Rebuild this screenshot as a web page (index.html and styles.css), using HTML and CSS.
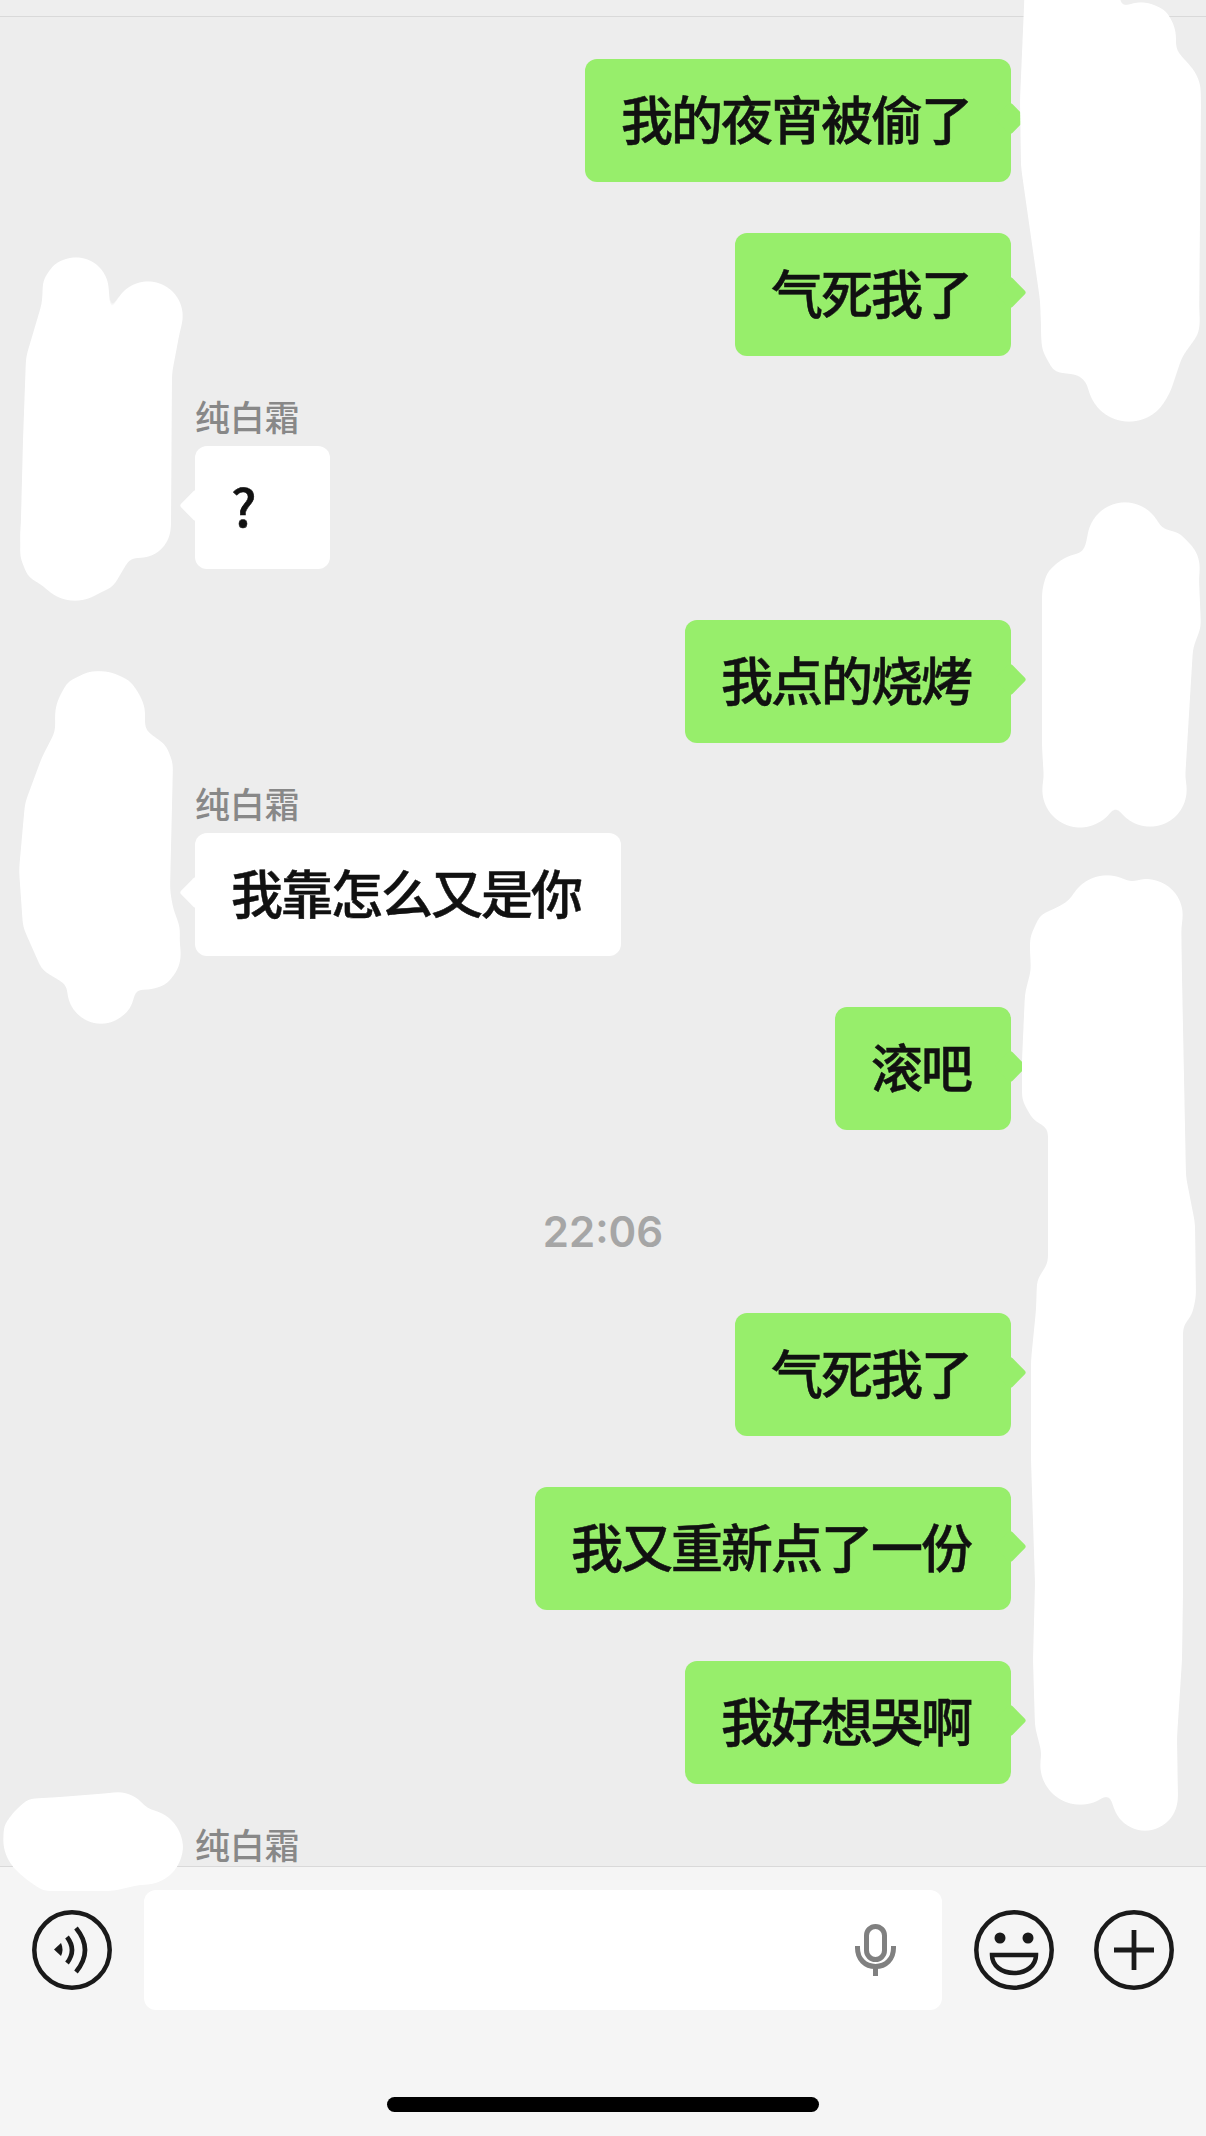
FILE: index.html
```html
<!DOCTYPE html>
<html lang="zh-CN">
<head>
<meta charset="utf-8">
<title>纯白霜</title>
<link rel="stylesheet" href="styles.css">
</head>
<body>
<div class="app">
  <div class="topbar"></div>
  <main class="chat">
    <div class="row me"><div class="bubble">我的夜宵被偷了</div></div>
    <div class="row me"><div class="bubble">气死我了</div></div>
    <div class="row them"><div class="name">纯白霜</div><div class="bubble bubble-short">?</div></div>
    <div class="row me"><div class="bubble">我点的烧烤</div></div>
    <div class="row them"><div class="name">纯白霜</div><div class="bubble">我靠怎么又是你</div></div>
    <div class="row me"><div class="bubble">滚吧</div></div>
    <div class="time">22:06</div>
    <div class="row me"><div class="bubble">气死我了</div></div>
    <div class="row me"><div class="bubble">我又重新点了一份</div></div>
    <div class="row me"><div class="bubble">我好想哭啊</div></div>
    <div class="row them"><div class="name">纯白霜</div></div>
  </main>
  <footer class="bar">
    <div class="controls">
      <svg class="icon" viewBox="0 0 80 80" fill="none" stroke="#1a1a1a">
        <circle cx="40" cy="40" r="37.7" stroke-width="4.5"/>
        <path d="M22 39.5 L29 33 Q32 39.5 29 46Z" fill="#1a1a1a" stroke="none"/>
        <path d="M35 27 Q45 40 35 53" stroke-width="4.6"/>
        <path d="M44 18 Q62 40 44 62" stroke-width="4.6"/>
      </svg>
      <div class="input">
        <svg class="mic" viewBox="0 0 41 52" fill="none" stroke="#808080" stroke-width="5">
          <rect x="11.5" y="2.5" width="18" height="33" rx="9"/>
          <path d="M2.5 22 V24 C2.5 35 10 42.5 20.5 42.5 C31 42.5 38.5 35 38.5 24 V22"/>
          <path d="M20.5 42 V52"/>
        </svg>
      </div>
      <svg class="icon" viewBox="0 0 80 80" fill="none" stroke="#1a1a1a" stroke-width="4.5">
        <circle cx="40" cy="40" r="37.7"/>
        <circle cx="26" cy="28" r="5.5" fill="#1a1a1a" stroke="none"/>
        <circle cx="54" cy="28" r="5.5" fill="#1a1a1a" stroke="none"/>
        <path d="M18 45 H62 C62 56 52 63 40 63 C28 63 18 56 18 45Z"/>
      </svg>
      <svg class="icon icon-plus" viewBox="0 0 80 80" fill="none" stroke="#1a1a1a">
        <circle cx="40" cy="40" r="37.7" stroke-width="4.5"/>
        <path d="M20 40 H60 M40 20 V60" stroke-width="4.8"/>
      </svg>
    </div>
    <div class="home"></div>
  </footer>
  <svg class="scribbles" viewBox="0 0 1206 2136" fill="#fff">
    <defs>
      <filter id="soften" filterUnits="userSpaceOnUse" x="-40" y="-60" width="1290" height="2240">
        <feGaussianBlur stdDeviation="5"/>
        <feColorMatrix values="0 0 0 0 1  0 0 0 0 1  0 0 0 0 1  0 0 0 14 -6.5"/>
      </filter>
    </defs>
    <g filter="url(#soften)">
      <polygon points="1026,-40 1120,-40 1120,12 1141,3 1166,10 1176,33 1176,50 1194,70 1201,100 1199,333 1182,357 1170,393 1149,417 1129,422 1100,410 1087,383 1079,375 1054,372 1042,350 1040,300 1021,167 1020,100"/>
      <circle cx="1141" cy="37" r="35"/>
      <circle cx="1165" cy="92" r="36"/>
      <circle cx="1129" cy="380" r="42"/>
      <circle cx="1078" cy="335" r="37"/>
      <circle cx="1163" cy="320" r="37"/>

      <polygon points="20,557 23,440 26,357 42,303 43,280 55,263 75,257 97,265 109,290 109,337 115,310 128,287 148,281 170,290 183,315 172,373 171,527 163,547 140,558 130,558 113,587 90,597 72,601 47,588 28,577"/>
      <circle cx="76" cy="290" r="33"/>
      <circle cx="148" cy="316" r="35"/>
      <circle cx="75" cy="560" r="41"/>
      <circle cx="57" cy="535" r="37"/>
      <circle cx="140" cy="527" r="31"/>

      <polygon points="1042,593 1047,572 1062,560 1083,553 1092,523 1107,507 1125,502 1147,510 1160,528 1180,533 1197,553 1199,580 1201,627 1193,648 1187,747 1184,797 1173,818 1150,827 1130,820 1117,800 1107,818 1080,827 1057,818 1045,797 1042,747"/>
      <circle cx="1125" cy="540" r="38"/>
      <circle cx="1165" cy="568" r="35"/>
      <circle cx="1084" cy="595" r="42"/>
      <circle cx="1080" cy="790" r="38"/>
      <circle cx="1150" cy="790" r="37"/>

      <polygon points="56,707 67,682 90,671 109,675 130,680 145,707 145,730 166,745 173,763 170,890 173,908 180,927 179,967 166,985 145,990 135,988 130,1010 101,1024 76,1013 67,985 42,970 23,927 19,870 25,803 42,757 55,732"/>
      <circle cx="100" cy="716" r="45"/>
      <circle cx="145" cy="954" r="36"/>
      <circle cx="101" cy="990" r="34"/>

      <polygon points="1030,937 1040,915 1058,907 1075,897 1087,883 1107,875 1128,883 1147,878 1170,888 1181,908 1182,977 1186,1177 1195,1223 1196,1297 1192,1315 1183,1326 1183,1593 1182,1660 1177,1737 1178,1800 1170,1820 1145,1831 1122,1822 1111,1800 1109,1787 1097,1802 1080,1805 1058,1797 1046,1777 1044,1762 1035,1727 1033,1660 1035,1583 1031,1460 1031,1360 1036,1310 1037,1280 1048,1263 1048,1128 1033,1120 1022,1100 1022,1060 1025,993 1031,970 1030,950"/>
      <circle cx="1107" cy="915" r="40"/>
      <circle cx="1147" cy="915" r="36"/>
      <circle cx="1070" cy="950" r="40"/>
      <circle cx="1060" cy="1090" r="38"/>
      <circle cx="1145" cy="1798" r="33"/>
      <circle cx="1080" cy="1765" r="40"/>
      <circle cx="1150" cy="1280" r="45"/>

      <polygon points="3,1826 27,1799 60,1797 123,1792 157,1815 184,1846 180,1860 160,1880 113,1891 43,1891 23,1877 13,1860"/>
      <circle cx="45" cy="1840" r="42"/>
      <circle cx="118" cy="1825" r="33"/>
      <circle cx="145" cy="1847" r="38"/>
    </g>
  </svg>
</div>
</body>
</html>
```

FILE: styles.css
```css
* {
  box-sizing: border-box;
}

html,
body {
  margin: 0;
  padding: 0;
}

body {
  background: #ededed;
  font-family: "Noto Sans CJK SC", "Liberation Sans", sans-serif;
}

.app {
  position: relative;
  display: flex;
  flex-direction: column;
  width: 1206px;
  height: 2136px;
  overflow: hidden;
  background: #ededed;
}

.topbar {
  flex: none;
  height: 17px;
  border-bottom: 1px solid #d9d9d9;
  background: #eeeeee;
}

.chat {
  flex: none;
  display: flex;
  flex-direction: column;
  gap: 51px;
  height: 1849px;
  padding: 42px 195px 0;
}

.row {
  display: flex;
  flex-direction: column;
}

.me {
  align-items: flex-end;
}

.them {
  align-items: flex-start;
}

.name {
  height: 40px;
  margin: -11px 0 10px 0;
  color: #888888;
  font-size: 35px;
  font-weight: 500;
  letter-spacing: -0.3px;
  line-height: 40px;
}

.bubble {
  position: relative;
  height: 123px;
  padding: 0 40px 0 36px;
  border-radius: 12px;
  color: #111111;
  font-size: 52px;
  font-weight: 500;
  letter-spacing: -2px;
  line-height: 118px;
  white-space: nowrap;
  -webkit-text-stroke: 0.5px #111111;
}

.bubble::after {
  content: "";
  position: absolute;
  top: calc(50% - 13.5px);
  width: 23px;
  height: 23px;
  border-radius: 3px;
  background: inherit;
  transform: rotate(45deg);
}

.me .bubble {
  background: #97ee6b;
}

.me .bubble::after {
  right: -11px;
}

.them .bubble {
  background: #ffffff;
}

.them .bubble::after {
  left: -11px;
}

.bubble-short {
  width: 135px;
}

.time {
  height: 81px;
  padding-top: 20px;
  color: #a6a6a6;
  font-family: Inter, "Liberation Sans", sans-serif;
  font-size: 42px;
  font-weight: 600;
  line-height: 62px;
  text-align: center;
}

.bar {
  flex: 1;
  display: flex;
  flex-direction: column;
  align-items: center;
  border-top: 1px solid #d9d9d9;
  background: #f5f5f5;
}

.controls {
  display: flex;
  align-items: center;
  gap: 32px;
  width: 100%;
  padding: 23px 32px 0;
}

.icon {
  flex: none;
  width: 80px;
  height: 80px;
}

.icon-plus {
  margin-left: 8px;
}

.input {
  flex: 1;
  display: flex;
  align-items: center;
  justify-content: flex-end;
  height: 120px;
  padding-right: 46px;
  border-radius: 12px;
  background: #ffffff;
}

.mic {
  width: 41px;
  height: 52px;
}

.home {
  width: 432px;
  height: 15px;
  margin-top: 87px;
  border-radius: 8px;
  background: #000000;
}

.scribbles {
  position: absolute;
  top: 0;
  left: 0;
  width: 1206px;
  height: 2136px;
  pointer-events: none;
}
```
